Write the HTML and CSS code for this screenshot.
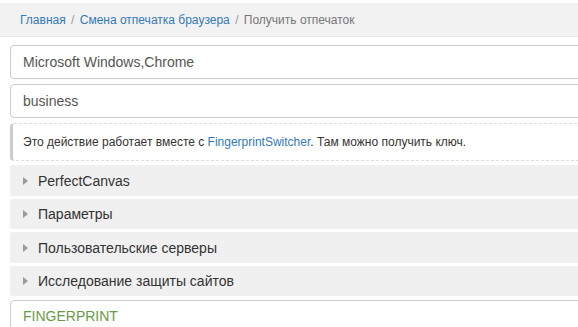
FILE: index.html
```html
<!DOCTYPE html>
<html>

<head>
	<title>Получить отпечаток</title>
	<link rel="stylesheet" href="styles.css">
</head>

<body>
	<div class="crumbs">
		<a href="#">Главная</a>
		<span class="sep">/</span>
		<a href="#">Смена отпечатка браузера</a>
		<span class="sep">/</span>
		<span class="active">Получить отпечаток</span>
	</div>
	<div class="main">
		<input type="text" class="field" value="Microsoft Windows,Chrome">
		<input type="text" class="field second" value="business">
		<div class="note">
			Это действие работает вместе с <a href="#">FingerprintSwitcher</a>. Там можно получить ключ.
		</div>
		<div class="sections">
			<div class="section"><span class="arrow"></span>PerfectCanvas</div>
			<div class="section"><span class="arrow"></span>Параметры</div>
			<div class="section"><span class="arrow"></span>Пользовательские серверы</div>
			<div class="section"><span class="arrow"></span>Исследование защиты сайтов</div>
		</div>
		<div class="result">FINGERPRINT</div>
	</div>
</body>

</html>
```

FILE: styles.css
```css
* {
	margin: 0px;
	padding: 0px;
	box-sizing: border-box;
}

body {
	background: white;
	font-family: "Liberation Sans", Arial, sans-serif;
	color: #333;
	overflow: hidden;
	width: 600px;
}

a {
	color: #337ab7;
	text-decoration: none;
}

.crumbs {
	margin-top: 3px;
	height: 34px;
	background: #f2f2f2;
	border-bottom: 1px solid #e8e8e8;
	padding: 9px 20px 0 20px;
	font-size: 12px;
	line-height: 16px;
}

.crumbs .sep {
	color: #999;
	padding: 0 2px;
}

.crumbs .active {
	color: #777;
}

.main {
	padding: 8px 0 0 10px;
	display: flex;
	flex-direction: column;
}

.field {
	height: 34px;
	width: 100%;
	border: 1px solid #ccc;
	border-radius: 4px;
	padding: 0 12px;
	font-family: "Liberation Sans", Arial, sans-serif;
	font-size: 14px;
	color: #555;
	background: white;
}

.second {
	margin-top: 5px;
}

.note {
	margin-top: 5px;
	height: 38px;
	border: 1px dashed #ddd;
	border-left: 3px solid #ccc;
	border-radius: 4px 0 0 4px;
	padding: 10px 10px 0 10px;
	font-size: 12px;
	line-height: 16px;
}

.sections {
	margin-top: 4px;
	display: flex;
	flex-direction: column;
	gap: 3px;
}

.section {
	height: 30.5px;
	background: #f0f0f0;
	border-radius: 3px 0 0 3px;
	display: flex;
	align-items: center;
	padding-left: 13px;
	padding-top: 1px;
	font-size: 14px;
}

.arrow {
	width: 0;
	height: 0;
	border-top: 4px solid transparent;
	border-bottom: 4px solid transparent;
	border-left: 5px solid #999;
	margin-right: 10px;
}

.result {
	margin-top: 4px;
	height: 40px;
	border: 1px solid #ccc;
	border-radius: 4px;
	padding: 7px 12px 0 12px;
	font-size: 14px;
	color: #6a9a45;
}
```
